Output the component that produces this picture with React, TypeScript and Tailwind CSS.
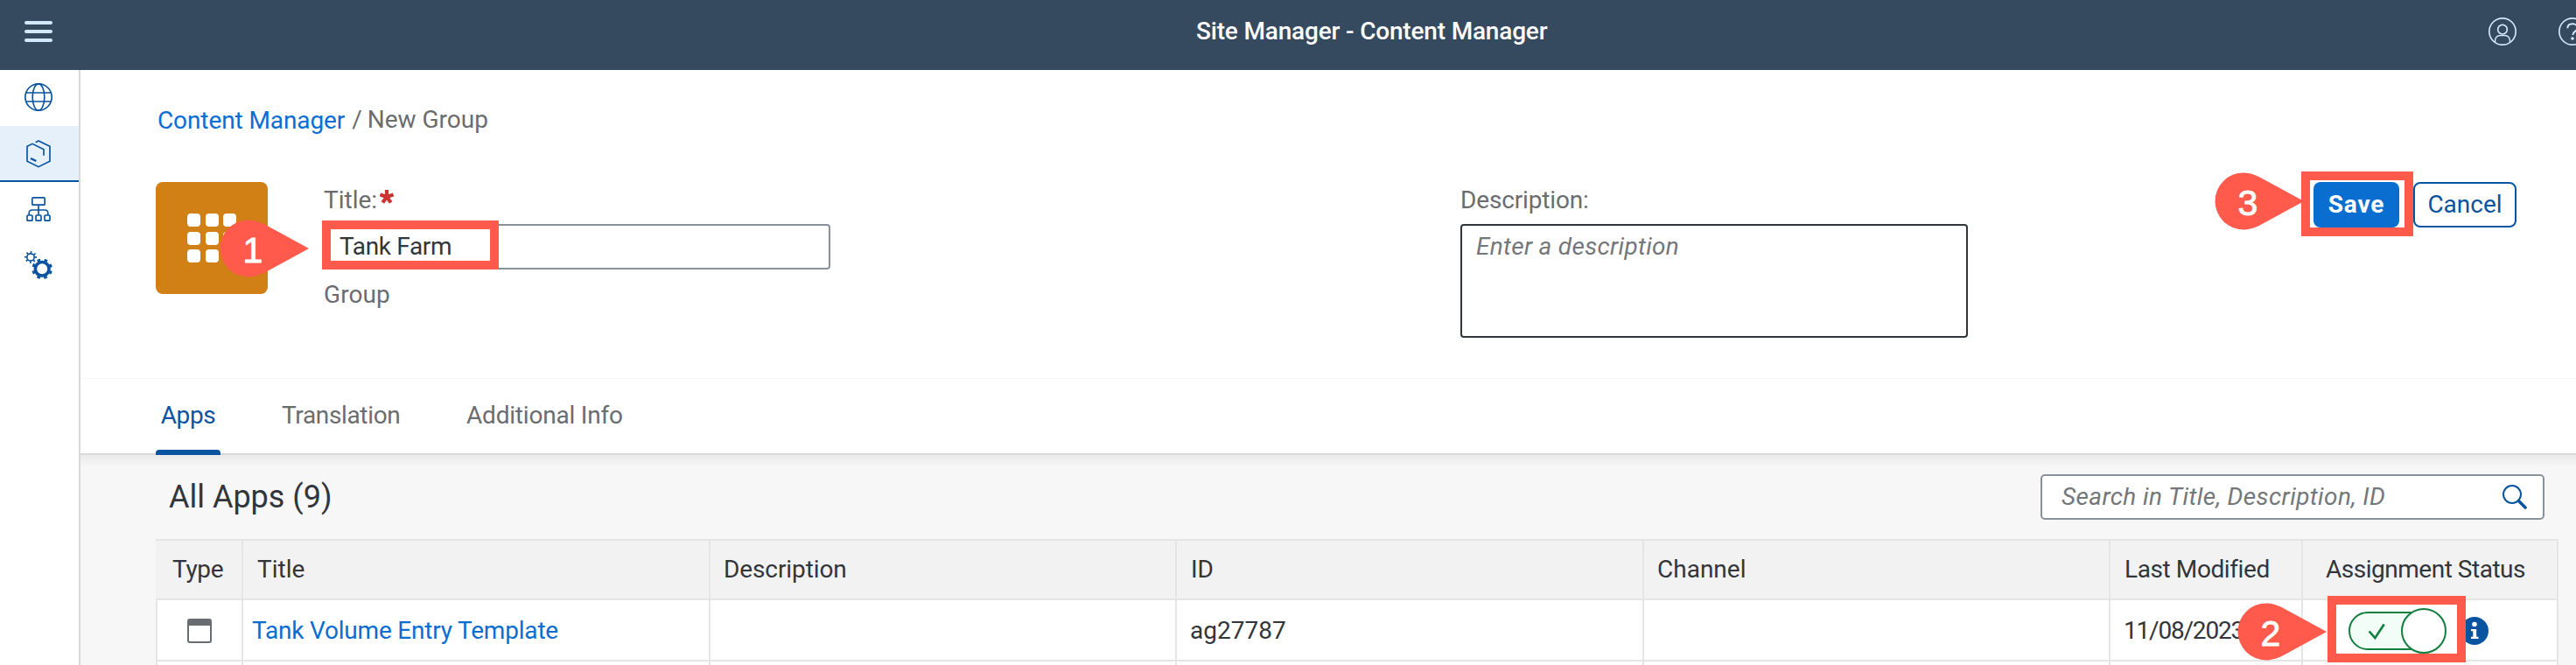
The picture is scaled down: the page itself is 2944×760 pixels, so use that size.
import type { ReactNode } from "react";

function Glyph({ box, size = "h-8 w-8", stroke = 5, children }: { box: string; size?: string; stroke?: number; children: ReactNode }) {
  return (
    <svg viewBox={box} className={`${size} shrink-0`} fill="none" stroke="currentColor" strokeWidth={stroke} strokeLinejoin="round">
      {children}
    </svg>
  );
}

function Callout({ place, n }: { place: string; n: string }) {
  return (
    <div className={`absolute z-20 h-[66px] w-[102px] ${place}`}>
      <svg viewBox="0 0 102 66" className="absolute inset-0 h-full w-full" fill="#ff5a4c">
        <path d="M33 0.4C43 0.4 52 5.5 58 9L102 33L58 57C52 60.5 43 65.4 33 65.4A32.5 32.5 0 0 1 33 0.4Z" />
      </svg>
      <span className="relative flex h-[66px] w-[76px] items-center justify-center pt-1 font-['Liberation_Sans',sans-serif] text-[41px] leading-none text-white [-webkit-text-stroke:0.9px_white]">
        {n}
      </span>
    </div>
  );
}

function Header() {
  return (
    <header className="flex h-20 w-full items-center overflow-hidden bg-[#354a5f] pb-2 text-[#d1e8ff]">
      <div className="ml-7 flex w-8 shrink-0 flex-col gap-1.5">
        <span className="h-1 rounded-full bg-current" />
        <span className="h-1 rounded-full bg-current" />
        <span className="h-1 rounded-full bg-current" />
      </div>
      <h1 className="ml-[1307px] w-[1477px] shrink-0 text-[28px] leading-10 font-medium tracking-[-0.18px] text-white">
        Site Manager - Content Manager
      </h1>
      <Glyph box="1092 60 96 96">
        <circle cx="1140" cy="108" r="45.5" />
        <circle cx="1140" cy="101" r="16" />
        <path d="M1114 144C1114 128 1123 121.500 1132 121.500H1148C1157 121.500 1166 128 1166 144" />
      </Glyph>
      <div className="ml-12 shrink-0">
        <Glyph box="1332 60 96 96">
          <circle cx="1380" cy="108" r="45.5" />
          <path d="M1363 97C1363 87 1370 82 1380 82C1390 82 1397 88 1397 96C1397 107 1381 107 1381 120" strokeWidth="6" />
          <circle cx="1380" cy="132" r="5.500" fill="currentColor" stroke="none" />
        </Glyph>
      </div>
    </header>
  );
}

function SideNav() {
  return (
    <nav className="flex w-[92px] shrink-0 flex-col border-r-2 border-[#d9d9d9] bg-white text-[#0854a0]">
      <div className="flex h-16 items-center pb-[2px] pl-7">
        <Glyph box="84 33 96 96">
          <circle cx="132" cy="81" r="45.500" />
          <ellipse cx="132" cy="81" rx="20.500" ry="45.500" />
          <path d="M89 66H175M89 96H175" />
        </Glyph>
      </div>
      <div className="flex h-16 items-center border-b-2 border-[#0854a0] bg-[#e5f0fa] pt-0.5 pl-7">
        <Glyph box="84 228 96 96">
          <path d="M122 236L132 231L171 250V301L132 320L93 301V250L111 241L150 260V281" strokeLinejoin="miter" />
          <path d="M105 291L124 300" strokeWidth="7" />
        </Glyph>
      </div>
      <div className="flex h-16 items-center pb-0.5 pl-7">
        <Glyph box="84 417 96 96">
          <rect x="110.500" y="425.500" width="43" height="25" rx="3" />
          <path d="M132 451V485M99.500 485V479Q99.500 468 110 468H154Q164.500 468 164.500 479V485" />
          <rect x="93" y="486" width="18" height="18.500" rx="3" />
          <rect x="123" y="486" width="18" height="18.500" rx="3" />
          <rect x="153" y="486" width="18" height="18.500" rx="3" />
        </Glyph>
      </div>
      <div className="flex h-16 items-center pb-0.5 pl-7">
        <Glyph box="84 609 96 96">
          <circle cx="144.500" cy="670" r="23.500" strokeWidth="11" />
          <circle cx="144.500" cy="670" r="31" strokeWidth="9" pathLength={16} strokeDasharray="0.9 1.1" transform="rotate(12.400 144.500 670)" />
          <circle cx="105" cy="630" r="12.500" strokeWidth="5" />
          <circle cx="105" cy="630" r="17.500" strokeWidth="7" pathLength={16} strokeDasharray="0.7 1.3" transform="rotate(-7.900 105 630)" />
        </Glyph>
      </div>
    </nav>
  );
}

function Form() {
  return (
    <section className="h-[352px] shrink-0 pt-[37px]">
      <div className="flex h-10 items-center gap-2 pl-[88px] text-[28px] leading-10 text-[#6a6d70]">
        <a className="pt-0.5 tracking-[-0.1px] text-[#0a6ed1]">Content Manager</a>
        <span className="-mr-0.5">/</span>
        <span>New Group</span>
      </div>
      <div className="mt-[51px] flex items-start pl-[86px]">
        <div className="flex h-32 w-32 shrink-0 items-center justify-center rounded-lg bg-[#d08014]">
          <div className="grid grid-cols-3 gap-[5.500px]">
            {Array.from({ length: 9 }, (_, i) => (
              <span key={i} className="h-[15px] w-[15px] rounded-[4px] bg-white" />
            ))}
          </div>
        </div>
        <div className="ml-[63px] w-[580px] shrink-0 text-[28px] leading-10 text-[#6a6d70]">
          <div className="flex h-10 items-center">
            <span className="w-[64px] pt-0.5 pl-px whitespace-nowrap">Title:</span>
            <svg viewBox="-8 -8 16 16" className="mb-1.5 ml-px h-4 w-4" stroke="#cc3333" strokeWidth="4.200">
              <path d="M0 0V-8M0 0L7.600-2.500M0 0L4.700 6.500M0 0L-4.700 6.500M0 0L-7.600-2.500" />
            </svg>
          </div>
          <div className="mt-2 flex h-[52px] items-center rounded border-2 border-[#89919a] bg-white pl-[17px] tracking-[-0.35px] text-[#32363a]">
            Tank Farm
          </div>
          <div className="mt-[9px] pl-px tracking-[0.1px]">Group</div>
        </div>
        <div className="ml-[720px] w-[580px] shrink-0 text-[28px] leading-10 text-[#6a6d70]">
          <div className="h-10 pt-px tracking-[-0.15px]">Description:</div>
          <div className="mt-2 h-[130px] rounded border-2 border-[#32363a] bg-white pt-[4px] pl-4 tracking-[0.3px] text-[#74777a] italic">
            Enter a description
          </div>
        </div>
        <div className="ml-[395px] flex shrink-0 gap-4 text-[28px] leading-10">
          <button className="flex h-[52px] w-[98px] items-center justify-center rounded-lg bg-[#0a6ed1] font-bold tracking-[0.9px] text-white">
            Save
          </button>
          <button className="flex h-[52px] w-[118px] items-center justify-center rounded-lg border-2 border-[#0854a0] bg-white text-[#0854a0]">
            Cancel
          </button>
        </div>
      </div>
    </section>
  );
}

function Tabs() {
  return (
    <div className="flex h-[88px] shrink-0 border-t border-b-2 border-t-[#f7f7f7] border-b-[#d9d9d9] pl-[86px] text-[28px] leading-10 text-[#6a6d70]">
      <div className="relative flex w-[74px] justify-center pt-[22px] tracking-[-0.4px] text-[#0854a0]">
        Apps
        <span className="absolute -bottom-0.5 left-0 h-1.5 w-full rounded-t bg-[#0854a0]" />
      </div>
      <div className="ml-[70px] w-[211px] pt-[22px] tracking-[-0.35px]">Translation</div>
      <div className="pt-[22px] tracking-[-0.2px]">Additional Info</div>
    </div>
  );
}

const HEAD_GRID = "grid grid-cols-[100px_534px_533px_534px_533px_220px_292px]";
const ROW_GRID = "grid grid-cols-[98px_534px_533px_534px_533px_220px_292px] border-l-2";
const CELL = "flex items-center border-r-2 border-[#e5e5e5] whitespace-nowrap";

function AppsTable() {
  return (
    <div className="ml-[86px] w-[2746px] border-t-2 border-[#e5e5e5] text-[28px] leading-10 text-[#32363a]">
      <div className={`${HEAD_GRID} h-[68px] border-b-2 border-[#e5e5e5] bg-[#f2f2f2]`}>
        <div className={`${CELL} pl-[19px] tracking-[-0.3px]`}>Type</div>
        <div className={`${CELL} pl-4`}>Title</div>
        <div className={`${CELL} pl-[15px] tracking-[-0.1px]`}>Description</div>
        <div className={`${CELL} pl-4`}>ID</div>
        <div className={`${CELL} pl-[15px]`}>Channel</div>
        <div className={`${CELL} pl-4 tracking-[-0.4px]`}>Last Modified</div>
        <div className={`${CELL} pl-[26px] tracking-[-0.48px]`}>Assignment Status</div>
      </div>
      <div className={`${ROW_GRID} h-[70px] border-b-2 border-[#e5e5e5] bg-white`}>
        <div className={`${CELL} justify-center pt-0.5`}>
          <div className="h-7 w-7 rounded-[3px] border-2 border-t-8 border-[#6a6d70]" />
        </div>
        <div className={`${CELL} pt-0.5 pl-[10px]`}>
          <a className="tracking-[-0.2px] text-[#0a6ed1]">Tank Volume Entry Template</a>
        </div>
        <div className={CELL} />
        <div className={`${CELL} pt-0.5 pl-[15px]`}>ag27787</div>
        <div className={CELL} />
        <div className={`${CELL} pt-0.5 pl-[15px] tracking-[-1.2px]`}>11/08/2023</div>
        <div className={`${CELL} pt-0.5 pl-[52px]`}>
          <div className="relative flex h-11 w-[110px] items-center rounded-full border-2 border-[#107e3e] bg-[#f1fdf6] pl-[19px] text-[#107e3e]">
            <Glyph box="495 150 66 62" size="h-[21px] w-[22px]" stroke={8}>
              <path d="M503 181L523 204L554 157" strokeLinejoin="miter" />
            </Glyph>
            <span className="absolute -top-1.5 -right-1 h-[52px] w-[52px] rounded-full border-2 border-[#107e3e] bg-white" />
          </div>
          <svg viewBox="0 0 32 32" className="ml-[18px] h-8 w-8">
            <circle cx="16" cy="16" r="16" fill="#0854a0" />
            <circle cx="16" cy="8.500" r="2.800" fill="#fff" />
            <path d="M12 14H18.200V22.800H20.500V25H12V22.800H14.300V16.200H12Z" fill="#fff" />
          </svg>
        </div>
      </div>
      <div className={`${ROW_GRID} h-1 border-[#e5e5e5] bg-white`}>
        {[0, 1, 2, 3, 4, 5, 6].map((i) => (
          <div key={i} className={CELL} />
        ))}
      </div>
    </div>
  );
}

export default function App() {
  return (
    <div className="relative h-[760px] w-[2944px] overflow-hidden bg-white font-[Roboto,sans-serif]">
      <Header />
      <div className="flex h-[680px]">
        <SideNav />
        <main className="flex min-w-0 flex-1 flex-col bg-white">
          <Form />
          <Tabs />
          <section className="flex-1 bg-[#f7f7f7] bg-[linear-gradient(#e9e9e9,#f7f7f7_13px)]">
            <div className="flex h-24 items-center justify-between pr-9 pl-[101px]">
              <h2 className="text-[36px] leading-10 text-[#32363a]">All Apps (9)</h2>
              <div className="flex h-[52px] w-[576px] items-center justify-between rounded-[5px] border-2 border-[#89919a] bg-white pr-[18px] pl-[22px] text-[28px] leading-10 text-[#74777a]">
                <span className="tracking-[0.38px] italic">Search in Title, Description, ID</span>
                <svg viewBox="0 0 28 28" className="h-7 w-7" fill="none" stroke="#0854a0" strokeLinecap="round">
                  <circle cx="11" cy="11" r="10" strokeWidth="2" />
                  <path d="M18.500 18.500L26 26" strokeWidth="3.600" />
                </svg>
              </div>
            </div>
            <AppsTable />
          </section>
        </main>
      </div>
      <div className="absolute top-[252px] left-[368px] z-10 h-14 w-[202px] border-[10px] border-[#ff5a4c]" />
      <Callout place="top-[251px] left-[251px]" n="1" />
      <div className="absolute top-[196px] left-[2630px] z-10 h-[74px] w-32 border-[10px] border-[#ff5a4c]" />
      <Callout place="top-[197px] left-[2531px]" n="3" />
      <div className="absolute top-[681px] left-[2660px] z-10 h-[76px] w-[158px] border-[10px] border-[#ff5a4c]" />
      <Callout place="top-[689px] left-[2557px]" n="2" />
    </div>
  );
}
